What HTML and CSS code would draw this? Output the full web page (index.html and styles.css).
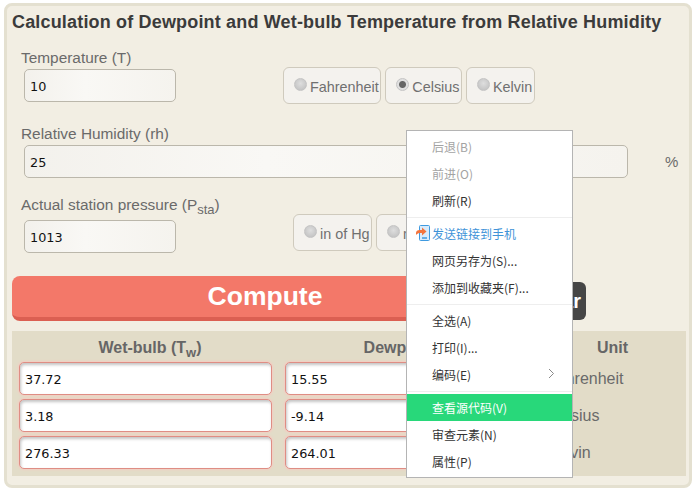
FILE: index.html
```html
<!DOCTYPE html>
<html lang="en">
<head>
  <meta charset="UTF-8" />
  <title>Dewpoint and Wet-bulb Calculator</title>
  <link rel="stylesheet" href="styles.css">
</head>
<body>

<div class="panel">
  <h1 class="title">Calculation of Dewpoint and Wet-bulb Temperature from Relative Humidity</h1>

  <div class="field-label first">Temperature (T)</div>
  <div class="field-row">
    <input class="box short" value="10" />
    <div class="radios temp-radios">
      <label class="radio"><input type="radio" name="temp" />Fahrenheit</label>
      <label class="radio"><input type="radio" name="temp" checked />Celsius</label>
      <label class="radio"><input type="radio" name="temp" />Kelvin</label>
    </div>
  </div>

  <div class="field-label second">Relative Humidity (rh)</div>
  <div class="field-row">
    <input class="box wide" value="25" />
    <span class="percent">%</span>
  </div>

  <div class="field-label third">Actual station pressure (P<sub>sta</sub>)</div>
  <div class="field-row">
    <input class="box short pressure-box" value="1013" />
    <div class="radios press-radios">
      <label class="radio"><input type="radio" name="press" />in of Hg</label>
      <label class="radio"><input type="radio" name="press" />mb</label>
      <label class="radio"><input type="radio" name="press" />kPa (hPA)</label>
    </div>
  </div>

  <div class="actions">
    <button type="button" class="btn compute">Compute</button>
    <button type="button" class="btn clear">Clear</button>
  </div>

  <div class="results">
    <div class="res-head">Wet-bulb (T<sub>w</sub>)</div>
    <div class="res-head">Dewpoint (T<sub>d</sub>)</div>
    <div class="res-head unit-head">Unit</div>
    <input class="res-box" value="37.72" />
    <input class="res-box" value="15.55" />
    <div class="unit">Fahrenheit</div>
    <input class="res-box" value="3.18" />
    <input class="res-box" value="-9.14" />
    <div class="unit">Celsius</div>
    <input class="res-box" value="276.33" />
    <input class="res-box" value="264.01" />
    <div class="unit">Kelvin</div>
  </div>
</div>

<div class="context-menu">
  <div class="menu-item disabled">后退(B)</div>
  <div class="menu-item disabled">前进(O)</div>
  <div class="menu-item">刷新(R)</div>
  <div class="menu-sep"></div>
  <div class="menu-item link">
    <svg class="send-icon" width="14" height="16" viewBox="0 0 14 16">
      <rect x="3.5" y="0.5" width="10" height="15" rx="1" fill="#d8ebfb" stroke="#3f9ae0" />
      <path d="M6 13h5" stroke="#3f9ae0" stroke-width="1.5" fill="none" />
      <path d="M0 10V8C0 6 1.5 5 3.5 5H6V2.500L10.500 6.500 6 10.500V8H3.500C2 8 1 9 0 10Z" fill="#f4743c" />
    </svg>
    发送链接到手机
  </div>
  <div class="menu-item">网页另存为(S)...</div>
  <div class="menu-item">添加到收藏夹(F)...</div>
  <div class="menu-sep"></div>
  <div class="menu-item">全选(A)</div>
  <div class="menu-item">打印(I)...</div>
  <div class="menu-item">编码(E)
    <svg class="arrow" width="7" height="11" viewBox="0 0 7 11"><path d="M1 1l4.500 4.500L1 10" fill="none" stroke="#8a8a8a" /></svg>
  </div>
  <div class="menu-sep"></div>
  <div class="menu-item active">查看源代码(V)</div>
  <div class="menu-item">审查元素(N)</div>
  <div class="menu-item">属性(P)</div>
</div>

</body>
</html>
```

FILE: styles.css
```css
html, body {
  margin: 0;
  padding: 0;
  background: #fff;
  font-family: "Liberation Sans", Arial, "Noto Sans CJK SC", sans-serif;
  color: #666;
}

body {
  width: 696px;
  height: 491px;
  overflow: hidden;
}

.panel {
  box-sizing: border-box;
  width: 688px;
  height: 485px;
  margin: 3px 0 0 4px;
  padding: 5px 5px 0 5px;
  background: #f2eee3;
  border: 3px solid #e4e0d0;
  border-radius: 8px;
}

.title {
  margin: 0;
  font-size: 18px;
  line-height: 22px;
  font-weight: bold;
  letter-spacing: 0.17px;
  color: #3b3b3b;
  white-space: nowrap;
}

.field-label {
  margin-left: 9px;
  font-size: 15.4px;
  line-height: 18px;
  color: #6a6a6a;
}

.field-label.first { margin-top: 16px; }
.field-label.second { margin-top: 21px; }
.field-label.third { margin-top: 18px; }

.field-label sub,
.res-head sub {
  font-size: 13px;
  line-height: 0;
}

.field-row {
  display: flex;
  align-items: flex-start;
  margin-left: 12px;
}

.box {
  box-sizing: border-box;
  height: 33px;
  margin: 2px 0 0;
  padding: 2px 5px 0;
  background: linear-gradient(to right, #f3f1ec, #f9f8f5 40%, #f5f3ee);
  border: 1px solid #bbb7ab;
  border-radius: 5px;
  font-family: "DejaVu Sans", Verdana, sans-serif;
  font-size: 12.8px;
  color: #111;
}

.short { width: 152px; }
.wide { width: 604px; }

.percent {
  margin: 9px 0 0 37px;
  font-size: 15px;
  line-height: 20px;
  color: #6a6a6a;
}

.radios {
  display: flex;
  gap: 4px;
}

.temp-radios { margin-left: 107px; }
.press-radios { margin-left: 117px; }
.pressure-box { margin-top: 6px; }

.radio {
  box-sizing: border-box;
  height: 37px;
  display: flex;
  align-items: center;
  gap: 3px;
  padding: 2px 1.5px 0 10px;
  background: #f4f2ee;
  border: 1px solid #cfcabd;
  border-radius: 6px;
  font-size: 14.4px;
  color: #707070;
  white-space: nowrap;
}

.radio input {
  appearance: none;
  width: 13px;
  height: 13px;
  margin: -5px 0 0;
  background: radial-gradient(circle at 50% 40%, #dedede, #bdbdbd);
  border: 1px solid #c4c4c4;
  border-radius: 50%;
}

.radio input:checked {
  background: radial-gradient(circle, #666 0 3px, #e0e0e0 4px);
}

.actions {
  display: flex;
  align-items: flex-end;
  gap: 8px;
  margin-top: 23px;
  height: 45px;
}

.btn {
  border: none;
  font-family: inherit;
  font-weight: bold;
  color: #fff;
}

.compute {
  width: 506px;
  height: 45px;
  background: #f37869;
  border-bottom: 4px solid #db5f52;
  border-radius: 8px;
  font-size: 26.500px;
}

.clear {
  width: 60px;
  height: 38px;
  margin-bottom: 1px;
  background: #464646;
  border-radius: 6px;
  font-size: 20px;
  padding: 0;
}

.results {
  display: grid;
  grid-template-columns: 253px 253px 1fr;
  grid-template-rows: 27px 33px 33px 33px;
  row-gap: 4px;
  column-gap: 13px;
  width: 674px;
  height: 145px;
  box-sizing: border-box;
  margin-top: 10px;
  padding: 0 7px;
  background: #e2dcc8;
}

.res-head {
  padding-left: 9px;
  font-size: 16px;
  font-weight: bold;
  line-height: 33px;
  text-align: center;
  color: #666;
}

.res-box {
  box-sizing: border-box;
  width: 100%;
  height: 33px;
  padding: 1px 5px 0;
  background: #fff;
  border: 1px solid #df8d84;
  border-radius: 5px;
  box-shadow: inset 1px 2px 3px #c4c4c4, 0 0 2px 1px #f3cdc2;
  font-family: "DejaVu Sans", Verdana, sans-serif;
  font-size: 12.8px;
  color: #111;
}

.unit {
  margin-left: -4px;
  font-size: 16px;
  line-height: 33px;
  color: #6a6a6a;
}

.res-head.unit-head {
  text-align: left;
  padding-left: 46px;
}

.context-menu {
  position: absolute;
  left: 406px;
  top: 130px;
  box-sizing: border-box;
  width: 167px;
  height: 348px;
  padding: 2px 0;
  background: #fff;
  border: 1px solid #b4b4b4;
  font-family: "Noto Sans CJK SC", sans-serif;
  font-size: 12px;
  color: #333;
}

.menu-item {
  position: relative;
  height: 27px;
  padding-left: 25px;
  line-height: 27px;
  white-space: nowrap;
}

.menu-item.disabled { color: #a3a3a3; }
.menu-item.link { color: #3f93d8; }

.menu-item.active {
  background: #28d87a;
  color: #fff;
}

.menu-sep {
  height: 1px;
  margin: 2.500px 0;
  background: #eee;
}

.send-icon {
  position: absolute;
  left: 9px;
  top: 5px;
}

.arrow {
  position: absolute;
  right: 17px;
  top: 7px;
}
```
